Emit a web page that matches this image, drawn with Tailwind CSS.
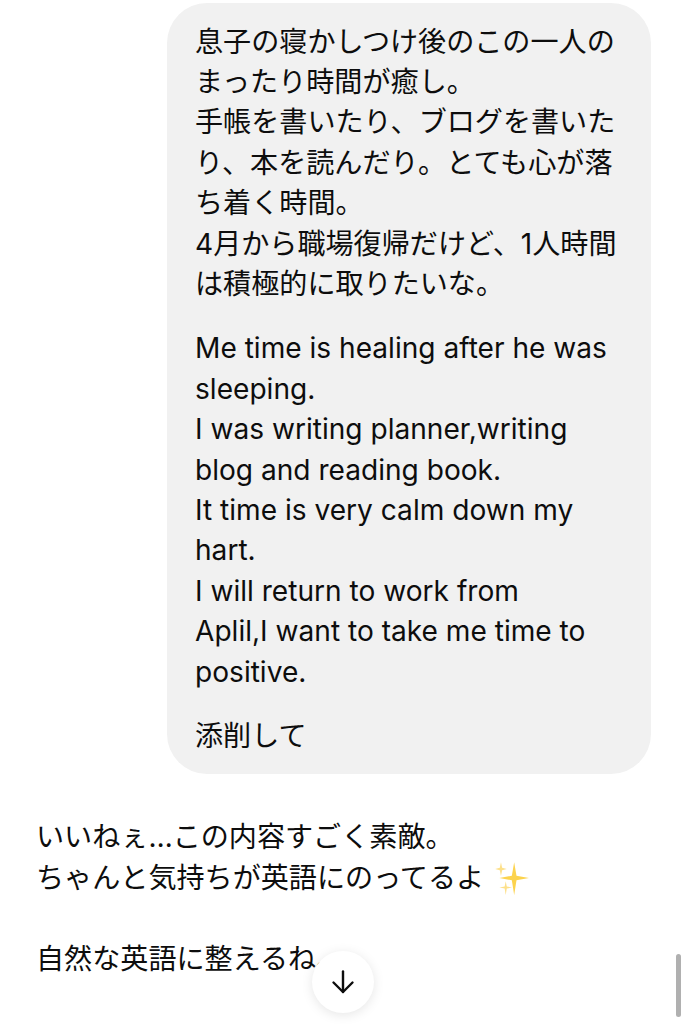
<!DOCTYPE html>
<html lang="ja">
<head>
  <meta charset="UTF-8">
  <title>Chat</title>
  <script src="https://cdn.jsdelivr.net/npm/@tailwindcss/browser@4"></script>
</head>
<body class="bg-white">
  <div class="relative h-[1024px] w-[687px] overflow-hidden bg-white text-[28.1px] leading-[40.4px] text-[#0d0d0d] font-['Inter','Noto_Sans_CJK_JP',sans-serif]">
    <!-- User message -->
    <div class="flex justify-end pt-[3px] pr-[36px]">
      <div class="w-[484px] rounded-[40px] bg-[#f1f1f1] pt-[18.5px] pr-[20px] pb-[17.5px] pl-[28px]">
        <p class="whitespace-nowrap">息子の寝かしつけ後のこの一人の<br>まったり時間が癒し。<br>手帳を書いたり、ブログを書いた<br>り、本を読んだり。とても心が落<br>ち着く時間。<br>4月から職場復帰だけど、1人時間<br>は積極的に取りたいな。</p>
        <p class="mt-[24px] whitespace-nowrap">Me time is healing after he was<br>sleeping.<br>I was writing planner,writing<br>blog and reading book.<br>It time is very calm down my<br>hart.<br>I will return to work from<br>Aplil,I want to take me time to<br>positive.</p>
        <p class="mt-[24px] whitespace-nowrap">添削して</p>
      </div>
    </div>
    <!-- Assistant message -->
    <div class="mt-[43.5px] pl-[36px]">
      <p class="whitespace-nowrap">いいねぇ…この内容すごく素敵。</p>
      <p class="flex items-center whitespace-nowrap">ちゃんと気持ちが英語にのってるよ
        <svg class="ml-[8px] h-[38px] w-[38px]" viewBox="0 0 36 36" aria-hidden="true">
          <path fill="#fcd34d" d="M21 3 L23.2 15.8 L35 18 L23.2 20.2 L21 34 L18.8 20.2 L7 18 L18.8 15.8 Z"/>
          <path fill="#fde08a" d="M8.5 3 L9.6 8.4 L14 9.5 L9.6 10.6 L8.5 16 L7.4 10.6 L3 9.5 L7.4 8.4 Z"/>
          <path fill="#fde08a" d="M13 21 L14 26 L19 27 L14 28 L13 34 L12 28 L7 27 L12 26 Z"/>
        </svg>
      </p>
      <p class="mt-[40.4px] whitespace-nowrap">自然な英語に整えるね。</p>
    </div>
    <!-- Scroll to bottom button -->
    <button class="absolute top-[951px] left-[312px] flex h-[62px] w-[62px] items-center justify-center rounded-full bg-white shadow-[0_2px_12px_rgba(0,0,0,0.1)]">
      <svg class="h-[28px] w-[28px]" viewBox="0 0 28 28" fill="none" stroke="#0d0d0d" stroke-width="2.4" stroke-linecap="round" stroke-linejoin="round">
        <path d="M14 3.5V24"/>
        <path d="M4.5 14.5L14 24l9.5-9.5"/>
      </svg>
    </button>
    <!-- Scrollbar -->
    <div class="absolute top-[954px] left-[676px] h-[63px] w-[5px] rounded-full bg-[#b0b0b0]"></div>
  </div>
</body>
</html>
